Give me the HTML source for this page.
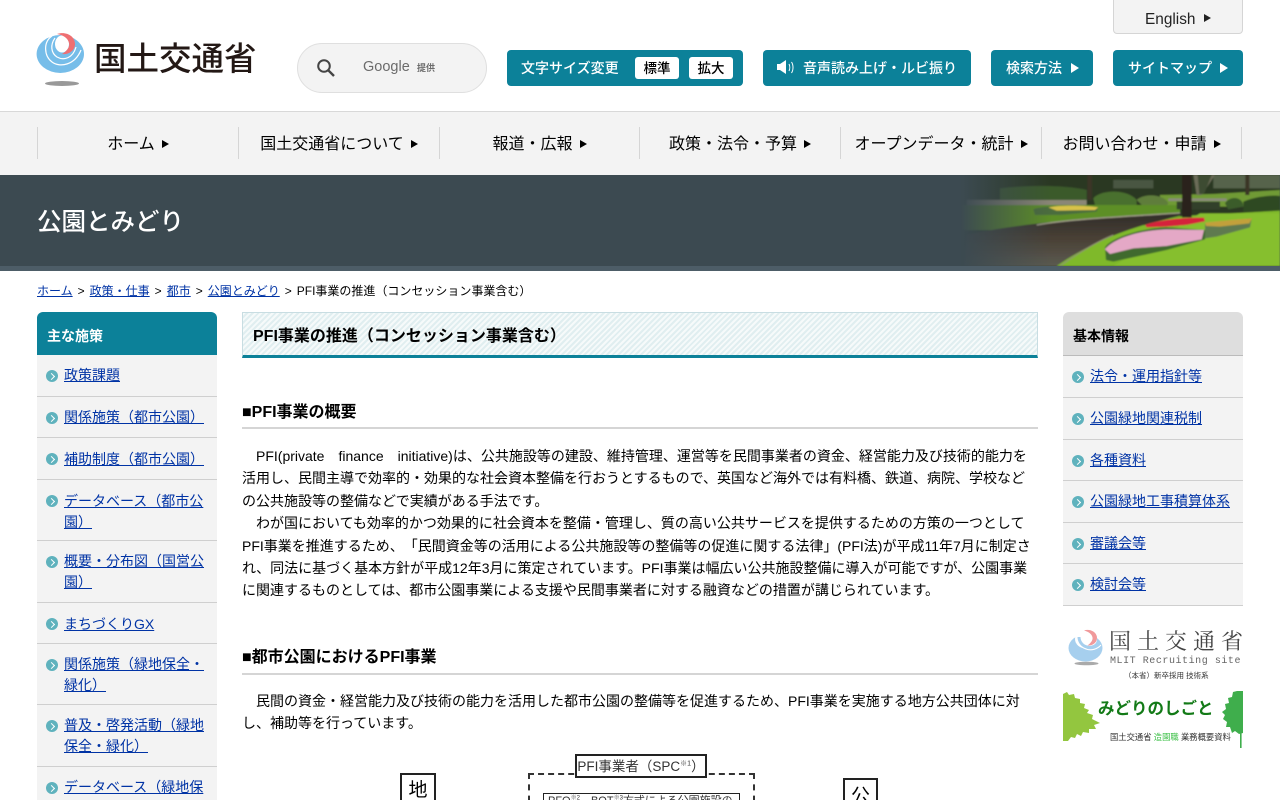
<!DOCTYPE html>
<html lang="ja"><head><meta charset="utf-8"><title>PFI事業の推進</title>
<style>
*{box-sizing:border-box}
html,body{margin:0;padding:0;width:1280px;height:800px;overflow:hidden;background:#fff}
body{position:relative;font-family:"Liberation Sans","Noto Sans CJK JP",sans-serif;font-size:14px;color:#000;text-spacing-trim:space-all}
.a{position:absolute}
a{color:#0033a5;text-decoration:underline}
.btn{position:absolute;top:50px;height:36px;background:#0c8199;border-radius:4px;color:#fff;font-size:14px;font-weight:500;line-height:37px;white-space:nowrap}
.tri{display:inline-block;width:0;height:0;border-style:solid;border-color:transparent transparent transparent currentColor;border-width:5px 0 5px 8px}
.nav{position:absolute;top:127px;height:32px;border-left:1px solid #d5d5d5;font-size:16px;line-height:35px;text-align:center;white-space:nowrap;color:#000}
.nav .tri{border-width:4.5px 0 4.5px 7px;margin-left:7px;vertical-align:1px}
.side{position:absolute;top:312px;width:180px}
.side .hd{height:43px;border-radius:6px 6px 0 0;font-weight:bold;line-height:48px;padding-left:10px}
.side ul{list-style:none;margin:0;padding:0;background:#f3f3f3}
.side li{position:relative;padding:10px 8px 0 27px;line-height:21px;border-bottom:1px solid #cfcfcf}
.side li:before{content:"";position:absolute;left:9px;top:15px;width:12px;height:12px;border-radius:50%;background:#5fb2bd}
.side li:after{content:"";position:absolute;left:12px;top:18.5px;width:4px;height:4px;border-top:1px solid #fff;border-right:1px solid #fff;transform:rotate(45deg)}
h3{position:absolute;left:242px;width:796px;margin:0;font-size:16px;border-bottom:2px solid #d5d5d5}
p{position:absolute;left:242px;width:796px;margin:0;line-height:22.4px}
.bc{margin:0 5px}
</style></head><body>

<!-- logo -->
<svg class="a" style="left:0;top:0" width="100" height="100" viewBox="0 0 100 100">
<ellipse cx="60.3" cy="54" rx="23.7" ry="19" fill="#76bde9"/>
<path d="M52 36C43 42 44 56 52 62 60 68 75 65 81 50" fill="none" stroke="#fff" stroke-width="1.2"/>
<path d="M55 38C50 45 51 53 57 57 64 61 73 58 76 47" fill="none" stroke="#fff" stroke-width="1.2"/>
<ellipse cx="62" cy="44" rx="7" ry="8.5" fill="#fff"/>
<path d="M57 34C66 31 75 36 75 44 75 51 68 55 62 54 67 51 70 47 69 43 68 38 63 35 57 34Z" fill="#ee6f72"/>
<ellipse cx="62" cy="83.5" rx="17" ry="2.5" fill="#999"/>
</svg>
<div class="a" style="left:94px;top:37px;font-size:32.5px;line-height:40px;font-family:'Noto Sans CJK JP',sans-serif;font-weight:500;color:#231815;white-space:nowrap">国土交通省</div>

<!-- search -->
<div class="a" style="left:297px;top:43px;width:190px;height:50px;border:1px solid #dfdfdf;border-radius:25px;background:#f3f3f3"></div>
<svg class="a" style="left:316px;top:58px" width="20" height="20" viewBox="0 0 20 20"><circle cx="8" cy="8" r="5.8" fill="none" stroke="#444" stroke-width="2"/><path d="M12.3 12.3L18 18" stroke="#444" stroke-width="2.4"/></svg>
<div class="a" style="left:363px;top:57px;font-size:14.5px;line-height:20px;color:#6b6b6b">Google</div>
<div class="a" style="left:417px;top:61px;font-size:9px;line-height:14px;color:#6b6b6b;font-weight:bold">提供</div>

<!-- english -->
<div class="a" style="left:1113px;top:-4px;width:130px;height:38px;background:#f3f3f3;border:1px solid #d5d5d5;border-radius:0 0 4px 4px"></div>
<div class="a" style="left:1145px;top:10px;font-size:15.4px;line-height:20px;color:#222">English</div>
<span class="a tri" style="left:1204px;top:14px;color:#222;border-width:4.5px 0 4.5px 7px"></span>

<!-- buttons -->
<div class="btn" style="left:507px;width:236px;padding-left:14px">文字サイズ変更</div>
<div class="a" style="left:635px;top:57px;width:44px;height:22px;background:#fff;border-radius:3px;text-align:center;line-height:23px;font-size:13.5px;font-weight:500">標準</div>
<div class="a" style="left:689px;top:57px;width:44px;height:22px;background:#fff;border-radius:3px;text-align:center;line-height:23px;font-size:13.5px;font-weight:500">拡大</div>
<div class="btn" style="left:763px;width:208px;padding-left:40px">音声読み上げ・ルビ振り</div>
<svg class="a" style="left:776px;top:59px" width="20" height="17" viewBox="0 0 20 17"><path d="M1 5h3l6-4v14l-6-4H1Z" fill="#fff"/><path d="M13 5c1 2 1 5 0 7M15.5 3c2 3 2 8 0 11" fill="none" stroke="#fff" stroke-width="1"/></svg>
<div class="btn" style="left:991px;width:102px;padding-left:15px">検索方法</div>
<span class="a tri" style="left:1071px;top:63px;color:#fff"></span>
<div class="btn" style="left:1113px;width:130px;padding-left:15px">サイトマップ</div>
<span class="a tri" style="left:1220px;top:63px;color:#fff"></span>

<!-- nav -->
<div class="a" style="left:0;top:111px;width:1280px;height:64px;background:#f3f3f3;border-top:1px solid #d8d8d8"></div>
<div class="nav" style="left:37px;width:201px">ホーム<span class="tri"></span></div>
<div class="nav" style="left:238px;width:201px">国土交通省について<span class="tri"></span></div>
<div class="nav" style="left:439px;width:200px">報道・広報<span class="tri"></span></div>
<div class="nav" style="left:639px;width:201px">政策・法令・予算<span class="tri"></span></div>
<div class="nav" style="left:840px;width:201px">オープンデータ・統計<span class="tri"></span></div>
<div class="nav" style="left:1041px;width:201px;border-right:1px solid #d5d5d5">お問い合わせ・申請<span class="tri"></span></div>

<!-- hero -->
<div class="a" style="left:0;top:175px;width:1280px;height:96px;background:#3c4a51"></div>
<div class="a" style="left:0;top:266px;width:1280px;height:5px;background:#4d5d67"></div>
<div class="a" style="left:900px;top:175px;width:380px;height:91px;overflow:hidden">
<svg class="a" style="left:0;top:-5px" width="380" height="110" viewBox="0 0 1140 330" preserveAspectRatio="none">
<defs>
<linearGradient id="f" x1="0" x2="1" y1="0" y2="0"><stop offset="0" stop-color="#3c4a51"/><stop offset=".16" stop-color="#3c4a51"/><stop offset=".4" stop-color="#3c4a51" stop-opacity="0"/></linearGradient>
<linearGradient id="w" x1="0" x2="0" y1="0" y2="1"><stop offset="0" stop-color="#2f2c28"/><stop offset=".5" stop-color="#4a4136"/><stop offset="1" stop-color="#5b5a50"/></linearGradient>
<filter id="b"><feGaussianBlur stdDeviation="2.4"/></filter>
</defs>
<g filter="url(#b)">
<rect width="1140" height="330" fill="#2b3824"/>
<rect x="640" y="30" width="120" height="25" fill="#4a5742"/>
<rect x="940" y="15" width="200" height="40" fill="#56634c"/>
<path d="M780 75L940 72 1140 60V110H780Z" fill="#6f9a35"/>
<path d="M300 55C380 45 500 45 560 60V90H300Z" fill="#3b5a2b"/>
<path d="M580 85C600 60 680 55 710 90V105H585Z" fill="#4a6f2e"/>
<path d="M710 90C730 70 790 70 805 100L790 118 730 110Z" fill="#5e7d3a"/>
<path d="M975 100C990 75 1030 80 1030 110L985 118Z" fill="#3a5c2a"/>
<path d="M1030 95C1070 78 1120 75 1140 78V125H1030Z" fill="#2e4a24"/>
<path d="M200 90H560V105H200Z" fill="#8b8776"/>
<path d="M160 105H840V180H160Z" fill="#5d8f28"/>
<path d="M400 118C430 105 540 105 595 112L590 125 480 135 405 135Z" fill="#4b6d3c"/>
<path d="M445 112C480 104 560 106 595 112L585 120 470 122Z" fill="#d9c24a"/>
<path d="M200 195C300 170 500 145 840 130L845 135C780 150 690 180 620 210 570 232 510 262 470 288H190Z" fill="url(#w)"/>
<path d="M410 165C500 148 660 140 840 129" fill="none" stroke="#9c9a84" stroke-width="4"/>
<path d="M470 288C560 225 690 165 850 138L1140 122V288Z" fill="#7fb92c"/>
<path d="M480 288C540 245 590 215 640 195" fill="none" stroke="#8f8a74" stroke-width="3"/>
<path d="M900 130H1140V288H640Z" fill="#86bf2e"/>
<path d="M615 232C630 205 720 175 800 172L915 180 915 208 800 240 640 275 618 270Z" fill="#3f6a2e"/>
<path d="M615 238C640 205 720 180 800 178L912 180 905 208 800 228 700 235 630 252Z" fill="#e4a8c6"/>
<path d="M915 160L1055 145 1050 172 950 200 915 205Z" fill="#5f7a50"/>
<path d="M915 158C960 152 1020 148 1056 145L1048 160 960 170 918 168Z" fill="#c2a03a"/>
<path d="M735 165C780 148 860 142 912 143L915 154 860 165 800 170 740 172Z" fill="#d5233a"/>
<path d="M805 85H980V93H805Z" fill="#8b8b7a"/>
<path d="M830 95H960V118H830Z" fill="#30402a"/>
<path d="M846 15H875V142H846Z" fill="#2a241a"/>
<path d="M562 15H576V90H562ZM1036 15H1048V75H1036Z" fill="#3a3426"/>
<path d="M880 15L890 75 905 75 945 15Z" fill="#6c6c58"/>
<path d="M893 15L898 72 912 72 935 15Z" fill="#3c4c30"/>
</g>
<rect width="1140" height="330" fill="url(#f)"/>
</svg>
</div>
<div class="a" style="left:37px;top:205px;font-size:24.5px;line-height:32px;color:#fff;font-weight:500;font-family:'Noto Sans CJK JP',sans-serif;white-space:nowrap">公園とみどり</div>

<!-- breadcrumb -->
<div class="a" style="left:37px;top:283px;font-size:12px;line-height:17px;white-space:nowrap"><a href="#">ホーム</a><span class="bc">&gt;</span><a href="#">政策・仕事</a><span class="bc">&gt;</span><a href="#">都市</a><span class="bc">&gt;</span><a href="#">公園とみどり</a><span class="bc">&gt;</span>PFI事業の推進（コンセッション事業含む）</div>

<!-- left -->
<div class="side" style="left:37px">
<div class="hd" style="background:#0c8199;color:#fff">主な施策</div>
<ul>
<li style="height:42px"><a href="#">政策課題</a></li>
<li style="height:41px"><a href="#">関係施策（都市公園）</a></li>
<li style="height:42px;padding-top:11px"><a href="#">補助制度（都市公園）</a></li>
<li style="height:61px;padding-top:11px"><a href="#">データベース（都市公園）</a></li>
<li style="height:62px"><a href="#">概要・分布図（国営公園）</a></li>
<li style="height:41px;padding-top:11px"><a href="#">まちづくりGX</a></li>
<li style="height:61px"><a href="#">関係施策（緑地保全・緑化）</a></li>
<li style="height:62px"><a href="#">普及・啓発活動（緑地保全・緑化）</a></li>
<li style="height:62px"><a href="#">データベース（緑地保全・緑化）</a></li>
</ul></div>

<!-- main -->
<div class="a" style="left:242px;top:312px;width:796px;height:46px;border:1px solid #c8dde2;border-bottom:3px solid #0c8199;background:repeating-linear-gradient(135deg,#f6fafa 0 2px,#e0eef0 2px 4px)"></div>
<div class="a" style="left:253px;top:325px;font-size:16px;line-height:23px;font-weight:bold;white-space:nowrap">PFI事業の推進（コンセッション事業含む）</div>
<h3 style="top:401px;height:28px;line-height:23px">■PFI事業の概要</h3>
<p style="top:445px">　PFI(private　finance　initiative)は、公共施設等の建設、維持管理、運営等を民間事業者の資金、経営能力及び技術的能力を活用し、民間主導で効率的・効果的な社会資本整備を行おうとするもので、英国など海外では有料橋、鉄道、病院、学校などの公共施設等の整備などで実績がある手法です。<br>　わが国においても効率的かつ効果的に社会資本を整備・管理し、質の高い公共サービスを提供するための方策の一つとしてPFI事業を推進するため、「民間資金等の活用による公共施設等の整備等の促進に関する法律」(PFI法)が平成11年7月に制定され、同法に基づく基本方針が平成12年3月に策定されています。PFI事業は幅広い公共施設整備に導入が可能ですが、公園事業に関連するものとしては、都市公園事業による支援や民間事業者に対する融資などの措置が講じられています。</p>
<h3 style="top:646px;height:29px;line-height:23px">■都市公園におけるPFI事業</h3>
<p style="top:690px">　民間の資金・経営能力及び技術の能力を活用した都市公園の整備等を促進するため、PFI事業を実施する地方公共団体に対し、補助等を行っています。</p>

<!-- diagram -->
<div class="a" style="left:400px;top:773px;width:36px;height:40px;border:2px solid #222;text-align:center;font-size:19px;line-height:27px;font-family:'Noto Sans CJK JP',sans-serif">地<br>方</div>
<div class="a" style="left:843px;top:778px;width:35px;height:40px;border:2px solid #222;text-align:center;font-size:19px;line-height:30px;font-family:'Noto Sans CJK JP',sans-serif">公</div>
<div class="a" style="left:528px;top:773px;width:227px;height:40px;border:2px dashed #333;border-width:2px 2px 0"></div>
<div class="a" style="left:575px;top:754px;width:132px;height:24px;border:2px solid #222;background:#fff;font-size:13.5px;line-height:21px;text-align:center;white-space:nowrap;color:#333">PFI事業者（SPC<sup style="font-size:7px;line-height:0">※1</sup>）</div>
<div class="a" style="left:543px;top:793px;width:197px;height:20px;border:1px solid #222;font-size:11px;line-height:14px;padding-left:4px;white-space:nowrap;color:#333">PFO<sup style="font-size:6px;line-height:0">※2</sup>、BOT<sup style="font-size:6px;line-height:0">※3</sup>方式による公園施設の</div>

<!-- right -->
<div class="side" style="left:1063px">
<div class="hd" style="background:#dedede;border-bottom:1px solid #bbb;height:44px">基本情報</div>
<ul>
<li style="height:42px"><a href="#">法令・運用指針等</a></li>
<li style="height:42px"><a href="#">公園緑地関連税制</a></li>
<li style="height:41px"><a href="#">各種資料</a></li>
<li style="height:42px"><a href="#">公園緑地工事積算体系</a></li>
<li style="height:41px"><a href="#">審議会等</a></li>
<li style="height:42px"><a href="#">検討会等</a></li>
</ul></div>

<!-- banner 1 -->
<svg class="a" style="left:1050px;top:600px" width="70" height="80" viewBox="0 0 70 80">
<ellipse cx="35.5" cy="48" rx="17" ry="13.5" fill="#a6cfee"/>
<ellipse cx="36" cy="39" rx="11" ry="9.5" fill="#fff"/>
<path d="M26.5 36.5A14 14 0 0 0 51 45" fill="none" stroke="#fff" stroke-width="1.1"/>
<path d="M29 37A10.5 10.5 0 0 0 48 43" fill="none" stroke="#a6cfee" stroke-width="3"/>
<path d="M34 30.5C40 28.5 47 32 47 38 47 43 42 46 37.5 45.5 41 43 43 40 42.5 37.5 42 34 38 31.5 34 30.5Z" fill="#f0999b"/>
<ellipse cx="36.5" cy="63.5" rx="12" ry="1.8" fill="#aaa"/>
</svg>
<div class="a" style="left:1109px;top:627px;font-size:22px;line-height:28px;letter-spacing:6px;color:#444;font-family:'Noto Serif CJK SC',serif;white-space:nowrap">国土交通省</div>
<div class="a" style="left:1110px;top:655px;font-family:'Liberation Mono',monospace;font-size:10px;line-height:14px;letter-spacing:.55px;color:#666;white-space:nowrap">MLIT Recruiting site</div>
<div class="a" style="left:1124px;top:670px;font-size:7.5px;line-height:12px;color:#333;white-space:nowrap">（本省）新卒採用 技術系</div>

<!-- banner 2 -->
<svg class="a" style="left:1063px;top:690px" width="180" height="58" viewBox="0 0 180 58">
<path d="M0 4l4-2 2 3 5-1 1 4 5 1 0 4 5 1-1 4 5 2-2 3 6 2-1 4 8 4-6 2 2 4-7 0 0 4-6-1-2 4-4-2-2 4-4-1-3 4-5 0Z" fill="#93c63f"/>
<path d="M174 1l6 0v42l-4 1-4-3-3 2-2-6-4 0 1-5-4-3 2-4-3-3 4-3-1-5 4-1-1-5 4-1 1-5Z" fill="#3fae4c"/>
<rect x="177" y="40" width="1.6" height="18" fill="#3fae4c"/>
</svg>
<div class="a" style="left:1098px;top:698px;font-size:16.5px;line-height:22px;font-weight:bold;color:#137a17;white-space:nowrap">みどりのしごと</div>
<div class="a" style="left:1110px;top:731px;font-size:8.3px;line-height:12px;color:#333;white-space:nowrap">国土交通省 <span style="color:#3fc04a">造園職</span> 業務概要資料</div>

</body></html>
